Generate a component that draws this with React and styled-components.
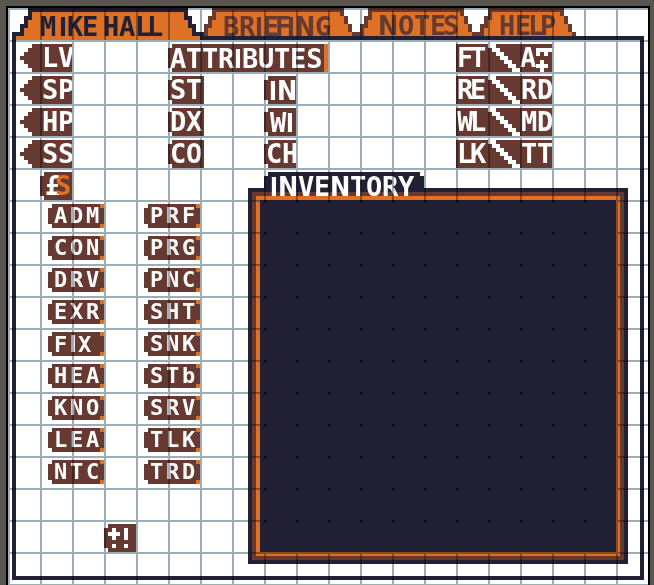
import React from "react";
import styled, { createGlobalStyle, css } from "styled-components";

const navy = "#222034";
const brown = "#663931";
const orange = "#df7126";
const gridLine = "#9badb7";

const GlobalStyle = createGlobalStyle`
  * { box-sizing: border-box; }
  html, body { margin: 0; background: #595650; overflow: hidden; }
`;

const Desktop = styled.main`
  width: 654px;
  height: 585px;
  padding: 6px 4px 0 6px;
  overflow: hidden;
  background: #595650;
  font-family: "DejaVu Sans Mono", monospace;
  font-weight: 700;
`;

const Paper = styled.div`
  position: relative;
  height: 600px;
  padding-left: 4px;
  border: 2px solid #000;
  background: #fff;
  isolation: isolate;
`;

const GridOverlay = styled.div`
  position: absolute;
  inset: 0;
  z-index: 1;
  pointer-events: none;
  mix-blend-mode: multiply;
  background:
    repeating-linear-gradient(90deg, ${gridLine} 0 2px, transparent 2px 32px),
    repeating-linear-gradient(180deg, ${gridLine} 0 2px, transparent 2px 32px);
`;

/* Text whose letters each take a set number of pixels */
const TextLine = styled.span`
  display: block;
  flex: none;
  white-space: pre;
  font-size: ${(p) => (p.$small ? 22 : 27)}px;
  line-height: ${(p) => (p.$small ? 16 : 20)}px;
  height: ${(p) => (p.$small ? 16 : 20)}px;
  color: ${(p) => p.$color || "#fff"};
`;

const Glyph = styled.span`
  letter-spacing: ${(p) => p.$spacing}px;
  ${(p) => p.$bar && css`
    font-family: "Liberation Sans", Arial, sans-serif;
    font-size: 1.05em;
  `}
  ${(p) => p.$wide && css`
    font-family: "DejaVu Sans Condensed", "DejaVu Sans", sans-serif;
    font-stretch: condensed;
  `}
`;

const advances = { I: 8, M: 20, N: 20, " ": 8 };

function PixelText({ children, small, color, widths = {} }) {
  const size = small ? 22 : 27;
  return (
    <TextLine $small={small} $color={color}>
      {[...children].map((char, i) => {
        const advance = widths[i] ?? (small ? (char === "I" ? 8 : 16) : advances[char] ?? 16);
        const bar = char === "I";
        const wide = char === "N" && !small;
        const natural = bar ? size * 1.05 * 0.278 : size * (wide ? 0.753 : 0.602);
        return (
          <Glyph key={i} $bar={bar} $wide={wide} $spacing={(advance - natural).toFixed(2)}>
            {char}
          </Glyph>
        );
      })}
    </TextLine>
  );
}

const TabBar = styled.nav`
  display: flex;
  height: 28px;
`;

const tabOutline = (foot) => `polygon(
  8px 0, calc(100% - ${foot + 8}px) 0, calc(100% - ${foot + 8}px) 8px,
  calc(100% - ${foot + 4}px) 8px, calc(100% - ${foot + 4}px) 16px,
  calc(100% - ${foot}px) 16px, calc(100% - ${foot}px) 24px,
  100% 24px, 100% 28px, 0 28px, 0 16px, 4px 16px, 4px 8px, 8px 8px)`;

const tabFace = (foot) => `polygon(
  12px 4px, calc(100% - ${foot + 12}px) 4px, calc(100% - ${foot + 12}px) 8px,
  calc(100% - ${foot + 8}px) 8px, calc(100% - ${foot + 8}px) 16px,
  calc(100% - ${foot + 4}px) 16px, calc(100% - ${foot + 4}px) 24px,
  calc(100% - ${foot}px) 24px, calc(100% - ${foot}px) 28px,
  4px 28px, 4px 20px, 8px 20px, 8px 12px, 12px 12px)`;

const Tab = styled.div`
  flex: none;
  display: grid;
  width: ${(p) => p.$width}px;
  height: 28px;
  background: ${brown};
  clip-path: ${(p) => tabOutline(p.$foot)};
`;

const TabFace = styled.div`
  height: 28px;
  padding: 8px 0 0 ${(p) => p.$inset}px;
  background: ${orange};
  clip-path: ${(p) => tabFace(p.$foot)};
`;

const ActiveTab = styled(Tab)`
  height: 32px;
  background: ${navy};
  clip-path: polygon(16px 0, 176px 0, 176px 8px, 180px 8px, 180px 16px,
    184px 16px, 184px 24px, 192px 24px, 192px 32px, 0 32px, 0 24px,
    8px 24px, 8px 16px, 12px 16px, 12px 8px, 16px 8px);
`;

const ActiveTabFace = styled(TabFace)`
  height: 32px;
  clip-path: polygon(20px 4px, 172px 4px, 172px 12px, 176px 12px, 176px 20px,
    180px 20px, 180px 28px, 188px 28px, 188px 32px, 4px 32px, 4px 28px,
    12px 28px, 12px 20px, 16px 20px, 16px 12px, 20px 12px);
`;

const Frame = styled.section`
  width: 632px;
  height: 544px;
  border: 4px solid ${navy};
  padding: 4px 0 0 4px;
`;

const StatsArea = styled.div`
  display: flex;
  height: 128px;
`;

const Stack = styled.div`
  display: flex;
  flex-direction: column;
  gap: 4px;
  width: ${(p) => p.$width}px;
  margin-right: ${(p) => p.$after || 0}px;
`;

const notch = "polygon(4px 0, 100% 0, 100% 100%, 4px 100%, 4px calc(100% - 4px), 0 calc(100% - 4px), 0 4px, 4px 4px)";

const Plate = styled.div`
  flex: none;
  display: flex;
  width: ${(p) => p.$width}px;
  height: 28px;
  padding: 4px 0 0 ${(p) => p.$inset ?? 4}px;
  background: ${brown};
  clip-path: ${(p) => (p.$square ? "inset(0)" : notch)};
`;

const ArrowPlate = styled(Plate)`
  clip-path: polygon(12px 0, 100% 0, 100% 100%, 12px 100%, 12px 24px, 8px 24px,
    8px 20px, 4px 20px, 4px 16px, 0 16px, 0 12px, 4px 12px, 4px 8px, 8px 8px,
    8px 4px, 12px 4px);
`;

const TitlePlate = styled(Plate)`
  border-right: 4px solid ${orange};
`;

const PlateRow = styled.div`
  display: flex;
  gap: ${(p) => p.$gap || 0}px;
`;

const SlashCell = styled.svg`
  display: block;
  width: 32px;
  height: 28px;
  background: ${brown};
`;

const BonusMark = styled.svg`
  display: block;
  flex: none;
  width: 20px;
  height: 24px;
`;

const LowerArea = styled.div`
  display: flex;
`;

const LeftPane = styled.div`
  width: 228px;
`;

const Money = styled(Plate)`
  margin-left: 20px;
`;

const SkillGrid = styled.div`
  display: grid;
  grid-template-columns: 56px 56px;
  gap: 8px 40px;
  margin: 4px 0 40px 28px;
`;

const Skill = styled.div`
  height: 24px;
  padding: 4px 0 0 6px;
  background:
    linear-gradient(${orange}, ${orange}) 100% 0 / 4px 4px no-repeat,
    linear-gradient(${orange}, ${orange}) 100% 100% / 4px 4px no-repeat,
    ${brown};
  clip-path: ${notch};
`;

const LuckPlate = styled(Plate)`
  margin-left: 84px;
`;

const Mark = styled.svg`
  display: block;
  width: 20px;
  height: 20px;
`;

const Inventory = styled.section`
  width: 380px;
`;

const InventoryTitle = styled.div`
  width: 160px;
  height: 16px;
  margin-left: 16px;
  padding: 4px 0 0 6px;
  background: linear-gradient(${navy}, ${navy}) 4px 0 / 152px 4px no-repeat,
    linear-gradient(${navy}, ${navy}) 0 4px / 160px 12px no-repeat;
  span { position: relative; }
`;

const InventoryPanel = styled.div`
  height: 376px;
  padding: 4px;
  background: ${navy};
`;

const InventoryBevel = styled.div`
  height: 368px;
  border: 4px solid ${brown};
  padding: 4px;
  background: ${orange};
`;

const Slots = styled.div`
  position: relative;
  z-index: 2;
  height: 352px;
  background:
    conic-gradient(from 270deg at 2px 2px, #000 90deg, transparent 0) 4px 0 / 32px 32px,
    ${navy};
`;

const tabs = [
  { name: "BRIEFING", width: 156, foot: 8, inset: 19, widths: { 3: 12, 4: 12, 6: 20 } },
  { name: "NOTES", width: 120, foot: 8, inset: 18, widths: { 0: 20, 3: 13 } },
  { name: "HELP", width: 96, foot: 4, inset: 19, widths: { 1: 13, 2: 12 } },
];

const attributes = [
  ["ST", "IN", 6],
  ["DX", "WI", 7],
  ["CO", "CH", 3],
];

const skills = [
  ["ADM", "PRF"], ["CON", "PRG"], ["DRV", "PNC"],
  ["EXR", "SHT"], ["FIX", "SNK"], ["HEA", "STb"],
  ["KNO", "SRV"], ["LEA", "TLK"], ["NTC", "TRD"],
];

const pairs = [["FT", "A"], ["RE", "RD"], ["WL", "MD"], ["LK", "TT"]];

function Slash() {
  return (
    <SlashCell viewBox="0 0 8 7" shapeRendering="crispEdges">
      <path fill="#fff" d="M0 0h2v1h1v1h1v1h1v1h1v1h1v1h1v1H6V6H5V5H4V4H3V3H2V2H1V1H0z" />
    </SlashCell>
  );
}

export default function App() {
  return (
    <Desktop>
      <GlobalStyle />
      <Paper>
        <TabBar>
          <ActiveTab $width={192} $foot={8}>
            <ActiveTabFace $inset={28}>
              <PixelText color={navy} widths={{ 0: 19, 2: 15, 3: 12, 4: 9, 7: 12, 8: 12 }}>MIKE HALL</PixelText>
            </ActiveTabFace>
          </ActiveTab>
          {tabs.map((t) => (
            <Tab key={t.name} $width={t.width} $foot={t.foot}>
              <TabFace $foot={t.foot} $inset={t.inset}>
                <PixelText color={brown} widths={t.widths}>{t.name}</PixelText>
              </TabFace>
            </Tab>
          ))}
        </TabBar>
        <Frame>
          <StatsArea>
            <Stack $width={52} $after={96}>
              {["LV", "SP", "HP", "SS"].map((s) => (
                <ArrowPlate key={s} $width={52} $inset={22}>
                  <PixelText>{s}</PixelText>
                </ArrowPlate>
              ))}
            </Stack>
            <Stack $width={160} $after={128}>
              <TitlePlate $width={160} $inset={2}>
                <PixelText>ATTRIBUTES</PixelText>
              </TitlePlate>
              {attributes.map(([a, b, inset]) => (
                <PlateRow key={a} $gap={60}>
                  <Plate $width={36} $inset={2}><PixelText>{a}</PixelText></Plate>
                  <Plate $width={32} $inset={inset - 1}><PixelText>{b}</PixelText></Plate>
                </PlateRow>
              ))}
            </Stack>
            <Stack $width={96}>
              {pairs.map(([a, b]) => (
                <PlateRow key={a}>
                  <Plate $width={32} $inset={1} $square>
                    <PixelText widths={{ 0: 13 }}>{a}</PixelText>
                  </Plate>
                  <Slash />
                  <Plate $width={32} $inset={b === "A" ? 0 : 1} $square>
                    <PixelText widths={b === "A" ? { 0: 12 } : { 0: 16 }}>{b}</PixelText>
                    {b === "A" && (
                      <BonusMark viewBox="0 0 5 6" shapeRendering="crispEdges">
                        <path fill="#fff" d="M1 0h4v1H4v1H3V1H2v1H1zM2 3h1v1h1v1H3v1H2V5H1V4h1z" />
                      </BonusMark>
                    )}
                  </Plate>
                </PlateRow>
              ))}
            </Stack>
          </StatsArea>
          <LowerArea>
            <LeftPane>
              <Money $width={32} $inset={5}>
                <PixelText widths={{ 0: 10 }}>£</PixelText>
                <PixelText color={orange}>S</PixelText>
              </Money>
              <SkillGrid>
                {skills.flat().map((s) => (
                  <Skill key={s}><PixelText small>{s}</PixelText></Skill>
                ))}
              </SkillGrid>
              <LuckPlate $width={32}>
                <Mark viewBox="0 0 5 5" shapeRendering="crispEdges" aria-label="+!">
                  <path fill="#fff" d="M1 0h1v1h1v1H2v1H1V2H0V1h1zM1 4h1v1H1zM4 0h1v3H4zM4 4h1v1H4z" />
                </Mark>
              </LuckPlate>
            </LeftPane>
            <Inventory>
              <InventoryTitle><PixelText>INVENTORY</PixelText></InventoryTitle>
              <InventoryPanel>
                <InventoryBevel><Slots /></InventoryBevel>
              </InventoryPanel>
            </Inventory>
          </LowerArea>
        </Frame>
        <GridOverlay />
      </Paper>
    </Desktop>
  );
}
